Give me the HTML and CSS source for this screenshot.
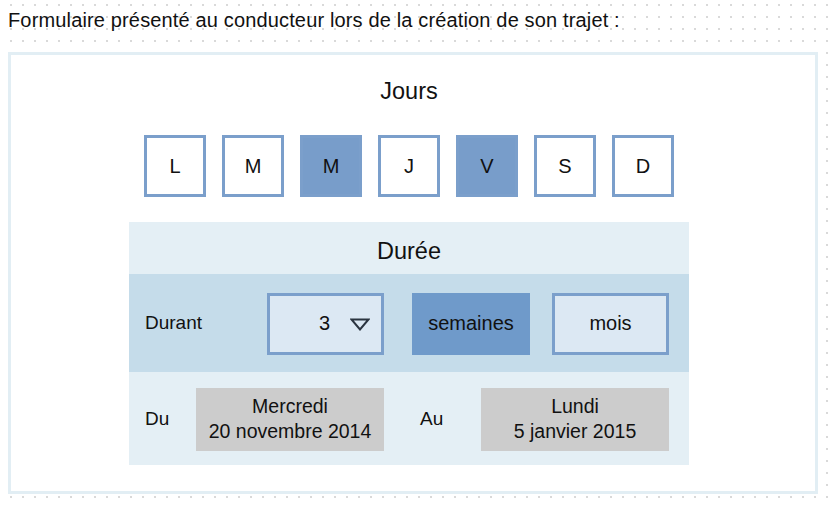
FILE: index.html
```html
<!DOCTYPE html>
<html lang="fr">
<head>
<meta charset="utf-8">
<title>Formulaire trajet</title>
<link rel="stylesheet" href="styles.css">
</head>
<body>
<p class="intro">Formulaire présenté au conducteur lors de la création de son trajet :</p>
<div class="frame">
  <div class="title">Jours</div>
  <div class="days">
    <div class="day">L</div>
    <div class="day">M</div>
    <div class="day on">M</div>
    <div class="day">J</div>
    <div class="day on">V</div>
    <div class="day">S</div>
    <div class="day">D</div>
  </div>
  <div class="panel">
    <div class="panel-head">Durée</div>
    <div class="row row-dur">
      <span class="lbl lbl-durant">Durant</span>
      <div class="box select">
        <span class="num">3</span>
        <svg class="caret" width="20" height="13" viewBox="0 0 20 13"><path d="M1.5 1.5 H18.5 L10 11.5 Z" fill="none" stroke="#2b3440" stroke-width="2" stroke-linejoin="miter"/></svg>
      </div>
      <div class="box unit sel">semaines</div>
      <div class="box unit">mois</div>
    </div>
    <div class="row row-dates">
      <span class="lbl lbl-du">Du</span>
      <div class="date">Mercredi<br>20 novembre 2014</div>
      <span class="lbl lbl-au">Au</span>
      <div class="date">Lundi<br>5 janvier 2015</div>
    </div>
  </div>
</div>
</body>
</html>
```

FILE: styles.css
```css
html {
  background-color: #ffffff;
  background-image: radial-gradient(circle, #d8d8d8 0.7px, transparent 1.1px);
  background-size: 12px 12px;
  background-position: 5px -1px;
  min-height: 100%;
}
body {
  margin: 8px;
  font-family: "Liberation Sans", Arial, sans-serif;
  color: #111;
}
.intro {
  margin: 0;
  font-size: 20px;
  letter-spacing: 0.15px;
  line-height: 24px;
}
.frame {
  margin-top: 20px;
  width: 810px;
  height: 442px;
  box-sizing: border-box;
  border: 3px solid #e2eef4;
  background: #fff;
  padding: 24px 8px 0 0;
  display: flex;
  flex-direction: column;
  align-items: center;
}
.title {
  font-size: 23.5px;
  line-height: 24px;
}
.days {
  margin-top: 32px;
  display: flex;
  gap: 16px;
}
.day {
  width: 62px;
  height: 62px;
  box-sizing: border-box;
  border: 3px solid #7b9fcb;
  background: #fff;
  display: flex;
  align-items: center;
  justify-content: center;
  font-size: 20px;
}
.day.on {
  background: #789dca;
}
.panel {
  margin-top: 25px;
  width: 560px;
  background: #e4eff5;
  display: flex;
  flex-direction: column;
}
.panel-head {
  height: 52px;
  box-sizing: border-box;
  padding-top: 17px;
  text-align: center;
  font-size: 23.5px;
  line-height: 24px;
}
.row {
  display: flex;
  align-items: center;
  padding-left: 16px;
  font-size: 19px;
}
.row-dur {
  height: 98px;
  background: #c5dcea;
}
.row-dates {
  height: 93px;
}
.lbl-durant { width: 122px; }
.lbl-du { width: 51px; }
.lbl-au { width: 61px; margin-left: 36px; }
.box {
  height: 62px;
  box-sizing: border-box;
  display: flex;
  align-items: center;
  justify-content: center;
  font-size: 20px;
}
.select {
  width: 117px;
  border: 3px solid #7b9fcb;
  background: #dce8f3;
  justify-content: flex-start;
  padding-left: 49px;
  margin-top: 1px;
}
.num { width: 31px; }
.caret { display: block; margin-top: 1px; }
.unit {
  width: 117px;
  margin-left: 22px;
  border: 3px solid #7b9fcb;
  background: #dce8f3;
  margin-top: 1px;
}
.unit.sel {
  width: 118px;
  margin-left: 28px;
  border: none;
  background: #6f9aca;
}
.date {
  width: 188px;
  height: 63px;
  box-sizing: border-box;
  background: #cccccc;
  text-align: center;
  font-size: 19.5px;
  line-height: 25px;
  padding-top: 6px;
  margin-top: 1px;
}
```
